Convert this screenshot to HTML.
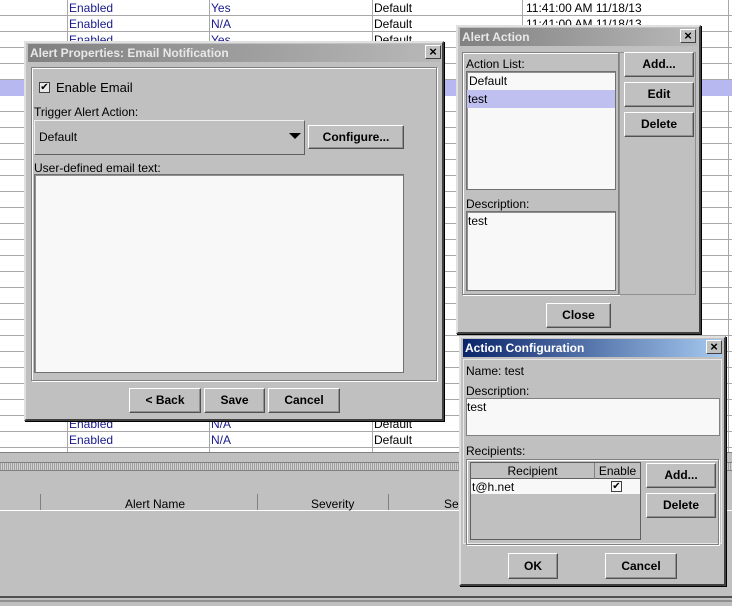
<!DOCTYPE html><html><head><style>
*{box-sizing:border-box;margin:0;padding:0}
body{width:732px;height:606px;overflow:hidden;background:#c0c0c0;font-family:"Liberation Sans",sans-serif;font-size:12px;position:relative}
.a{position:absolute}
.tbl{left:0;top:0;width:732px;height:452px;background:#fff;
background-image:linear-gradient(#a8a8a8 1px,transparent 1px);background-size:100% 16px;background-position:0 15px}
.vl{top:0;height:452px;width:1px;background:#a8a8a8}
.c{position:absolute;font-size:12px;line-height:16px}
.b{color:#1a1a8c}
.dlg{background:#c0c0c0;border:2px solid;border-color:#e0e0e0 #404040 #404040 #e0e0e0;box-shadow:1px 1px 0 #000}
.tt{left:2px;right:2px;top:1px;height:18px;color:#e8e8e8;font-weight:bold;font-size:12px;line-height:18px;padding-left:2px;background:linear-gradient(90deg,#808080,#b8b8b8)}
.x{width:16px;height:14px;background:#c0c0c0;border:1px solid;border-color:#fff #404040 #404040 #fff;font-size:13px;line-height:11px;text-align:center;color:#000;font-weight:bold}
.pnl{border:1px solid #808080;box-shadow:inset 1px 1px 0 #fff,1px 1px 0 #fff}
.btn{background:#c0c0c0;border:1px solid;border-color:#fff #505050 #505050 #fff;box-shadow:inset -1px -1px 0 #909090;font-weight:bold;text-align:center;font-size:12px;font-family:"Liberation Sans Narrow","Liberation Sans",sans-serif}
.fld{background:#f8f8f8;border:1px solid #707070;box-shadow:inset 1px 1px 0 #909090}
</style></head><body>
<div class="a tbl"></div>
<div class="a vl" style="left:67px"></div><div class="a vl" style="left:209px"></div><div class="a vl" style="left:372px"></div><div class="a vl" style="left:522px"></div><div class="a vl" style="left:728px"></div>
<div class="a" style="left:0;top:80px;width:732px;height:16px;background:#b8b8f0"></div>
<div class="c b" style="left:69px;top:0">Enabled</div><div class="c b" style="left:211px;top:0">Yes</div><div class="c" style="left:374px;top:0">Default</div><div class="c" style="left:526px;top:0">11:41:00 AM 11/18/13</div>
<div class="c b" style="left:69px;top:16px">Enabled</div><div class="c b" style="left:211px;top:16px">N/A</div><div class="c" style="left:374px;top:16px">Default</div><div class="c" style="left:526px;top:16px">11:41:00 AM 11/18/13</div>
<div class="c b" style="left:69px;top:32px">Enabled</div><div class="c b" style="left:211px;top:32px">Yes</div><div class="c" style="left:374px;top:32px">Default</div>
<div class="c b" style="left:69px;top:416px">Enabled</div><div class="c b" style="left:211px;top:416px">N/A</div><div class="c" style="left:374px;top:416px">Default</div>
<div class="c b" style="left:69px;top:432px">Enabled</div><div class="c b" style="left:211px;top:432px">N/A</div><div class="c" style="left:374px;top:432px">Default</div>
<div class="a" style="left:0;top:452px;width:732px;height:10px;background:#c0c0c0;border-top:1px solid #808080"></div>
<div class="a" style="left:0;top:462px;width:732px;height:9px;border-top:1px solid #808080;border-bottom:1px solid #808080;background:repeating-linear-gradient(90deg,#a0a0a0 0 1px,#d0d0d0 1px 2px)"></div>
<div class="a" style="left:0;top:494px;width:732px;height:17px;border-bottom:1px solid #fff"></div>
<div class="a" style="left:40px;top:494px;width:1px;height:16px;background:#808080"></div>
<div class="a" style="left:257px;top:494px;width:1px;height:16px;background:#808080"></div>
<div class="a" style="left:388px;top:494px;width:1px;height:16px;background:#808080"></div>
<div class="c" style="left:125px;top:496px">Alert Name</div><div class="c" style="left:311px;top:496px">Severity</div><div class="c" style="left:444px;top:496px">Se</div>
<div class="a" style="left:0;top:596px;width:732px;height:2px;background:#505050"></div>
<div class="a" style="left:0;top:600px;width:732px;height:2px;background:#909090"></div>

<!-- Email dialog -->
<div class="a dlg" style="left:24px;top:41px;width:420px;height:380px">
<div class="a tt">Alert Properties: Email Notification</div>
<div class="a x" style="left:399px;top:2px">×</div>
<div class="a pnl" style="left:5px;top:24px;width:406px;height:314px"></div>
<div class="a" style="left:13px;top:39px;width:11px;height:11px;border:1px solid #404040;background:#e8e8e8;font-size:10px;line-height:9px;text-align:center">✔</div>
<div class="c" style="left:30px;top:37px;font-size:13px">Enable Email</div>
<div class="c" style="left:8px;top:61px">Trigger Alert Action:</div>
<div class="a" style="left:8px;top:77px;width:271px;height:35px;border:1px solid;border-color:#f0f0f0 #606060 #606060 #f0f0f0"></div>
<div class="c" style="left:13px;top:86px">Default</div>
<div class="a" style="left:263px;top:90px;width:0;height:0;border-left:6px solid transparent;border-right:6px solid transparent;border-top:6px solid #000"></div>
<div class="a btn" style="left:282px;top:82px;width:96px;height:24px;line-height:22px">Configure...</div>
<div class="c" style="left:8px;top:117px">User-defined email text:</div>
<div class="a fld" style="left:8px;top:131px;width:370px;height:199px"></div>
<div class="a btn" style="left:103px;top:345px;width:72px;height:25px;line-height:23px">&lt; Back</div>
<div class="a btn" style="left:178px;top:345px;width:61px;height:25px;line-height:23px">Save</div>
<div class="a btn" style="left:242px;top:345px;width:72px;height:25px;line-height:23px">Cancel</div>
</div>

<!-- Alert Action -->
<div class="a dlg" style="left:456px;top:25px;width:245px;height:309px">
<div class="a tt">Alert Action</div>
<div class="a x" style="left:222px;top:2px">×</div>
<div class="a pnl" style="left:4px;top:25px;width:157px;height:243px"></div>
<div class="a" style="left:161px;top:25px;width:77px;height:243px;border:1px solid #909090"></div>
<div class="c" style="left:8px;top:29px">Action List:</div>
<div class="a fld" style="left:8px;top:44px;width:150px;height:119px"></div>
<div class="c" style="left:11px;top:46px">Default</div>
<div class="a" style="left:9px;top:63px;width:148px;height:18px;background:#c0c0f0"></div>
<div class="c" style="left:10px;top:64px">test</div>
<div class="c" style="left:8px;top:169px">Description:</div>
<div class="a fld" style="left:8px;top:184px;width:150px;height:80px"></div>
<div class="c" style="left:10px;top:186px">test</div>
<div class="a btn" style="left:166px;top:25px;width:70px;height:25px;line-height:23px">Add...</div>
<div class="a btn" style="left:166px;top:55px;width:70px;height:25px;line-height:23px">Edit</div>
<div class="a btn" style="left:166px;top:85px;width:70px;height:25px;line-height:23px">Delete</div>
<div class="a btn" style="left:88px;top:276px;width:65px;height:25px;line-height:23px">Close</div>
</div>

<!-- Action Configuration -->
<div class="a dlg" style="left:459px;top:336px;width:267px;height:250px">
<div class="a tt" style="background:linear-gradient(90deg,#0a246a,#a6caf0);color:#fff">Action Configuration</div>
<div class="a x" style="left:245px;top:2px">×</div>
<div class="a" style="left:2px;top:21px;width:259px;height:185px;border:1px solid #e8e8e8"></div>
<div class="c" style="left:5px;top:25px">Name: test</div>
<div class="c" style="left:5px;top:45px">Description:</div>
<div class="a fld" style="left:5px;top:60px;width:254px;height:38px;border-color:#808080;box-shadow:none"></div>
<div class="c" style="left:6px;top:61px">test</div>
<div class="c" style="left:5px;top:105px">Recipients:</div>
<div class="a pnl" style="left:5px;top:121px;width:253px;height:86px"></div>
<div class="a" style="left:9px;top:124px;width:171px;height:78px;border:1px solid #606060"></div>
<div class="a" style="left:10px;top:125px;width:169px;height:16px;border-bottom:1px solid #606060"></div>
<div class="a" style="left:133px;top:125px;width:1px;height:32px;background:#808080"></div>
<div class="c" style="left:10px;top:125px;width:123px;text-align:center">Recipient</div>
<div class="c" style="left:134px;top:125px;width:45px;text-align:center">Enable</div>
<div class="a" style="left:10px;top:141px;width:169px;height:16px;background:#f8f8f8;border-bottom:1px solid #c0c0c0"></div>
<div class="c" style="left:11px;top:141px">t@h.net</div>
<div class="a" style="left:150px;top:143px;width:11px;height:11px;border:1px solid #404040;font-size:10px;line-height:9px;text-align:center">✔</div>
<div class="a btn" style="left:185px;top:125px;width:70px;height:25px;line-height:23px">Add...</div>
<div class="a btn" style="left:185px;top:155px;width:70px;height:25px;line-height:23px">Delete</div>
<div class="a btn" style="left:47px;top:215px;width:50px;height:26px;line-height:24px">OK</div>
<div class="a btn" style="left:144px;top:215px;width:72px;height:26px;line-height:24px">Cancel</div>
</div>
</body></html>
